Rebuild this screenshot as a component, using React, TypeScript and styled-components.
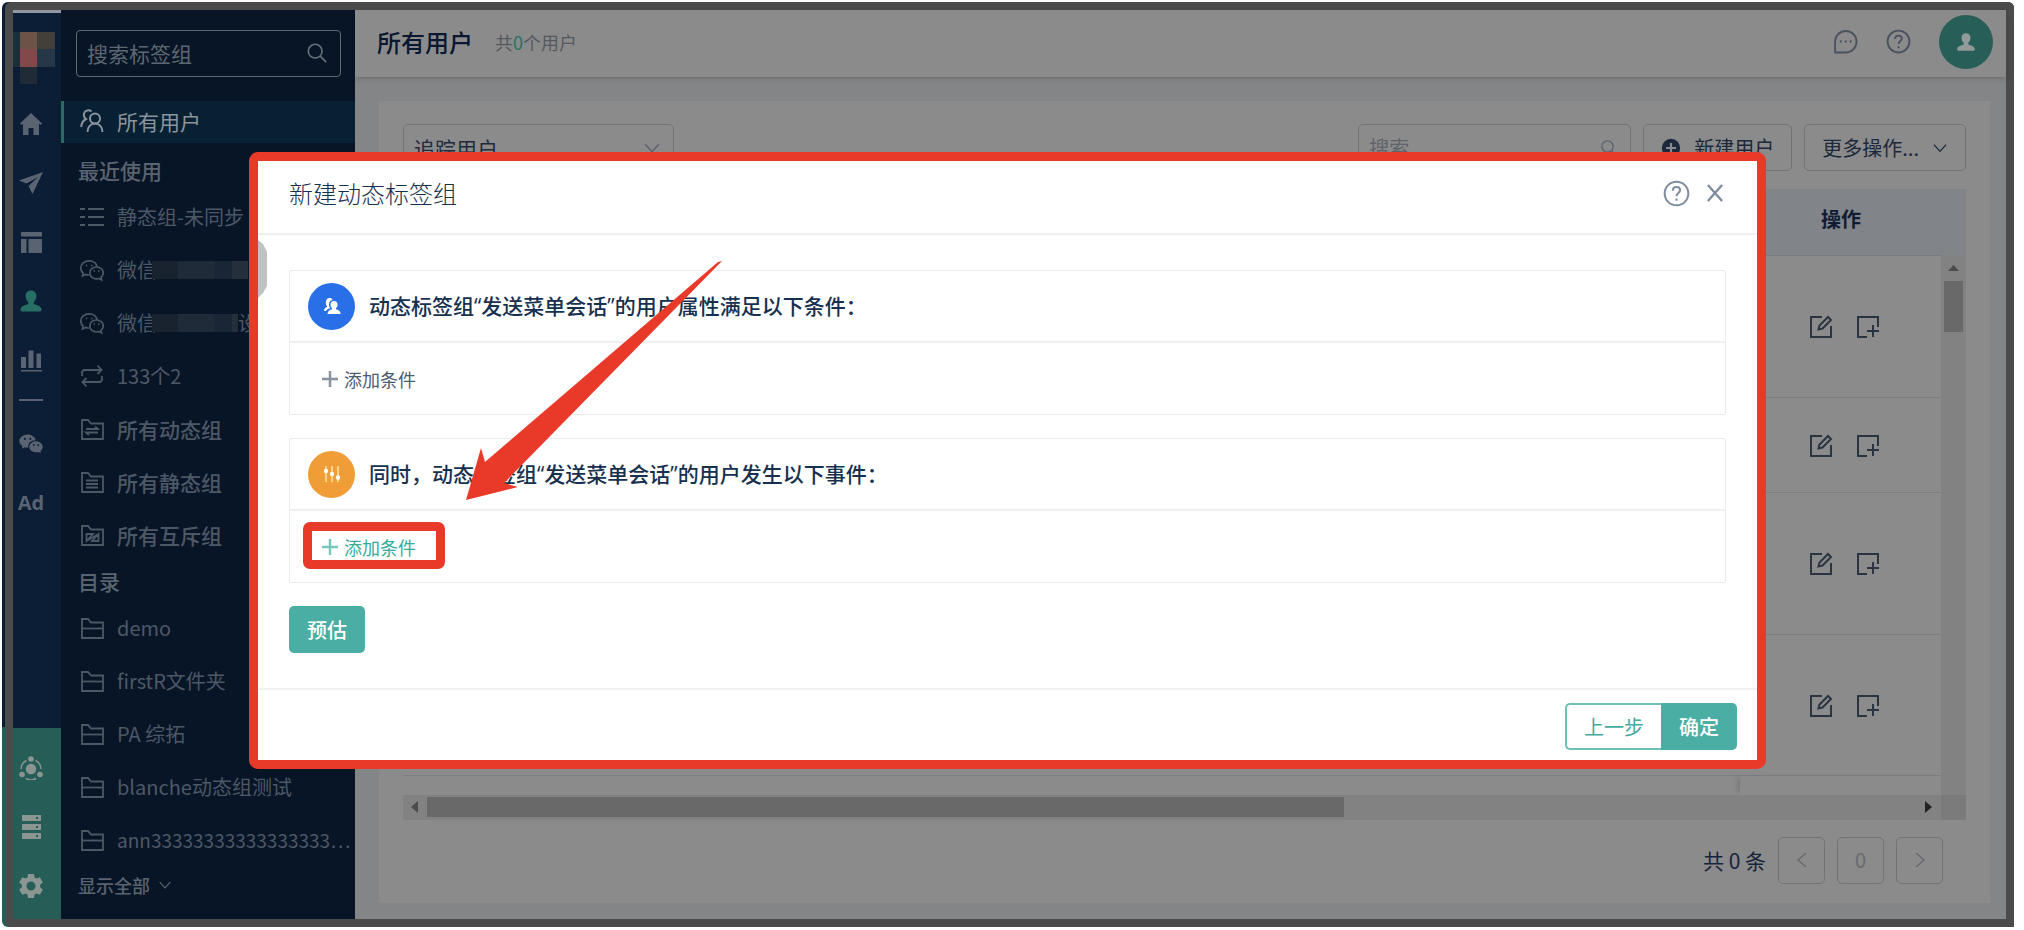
import React from "react";
import styled, { createGlobalStyle } from "styled-components";

const cjk = `"Noto Sans CJK SC", sans-serif`;
const mixed = `"Open Sans", "Noto Sans CJK SC", sans-serif`;

const Global = createGlobalStyle`
  * { box-sizing: border-box; }
  body { margin: 0; background: #fff; font-family: ${cjk}; font-size: 20px; line-height: 28px; color: #17233a; }
  button, input, select { font: inherit; color: inherit; margin: 0; padding: 0; border: 0; background: none; appearance: none; }
  a { color: inherit; text-decoration: none; }
  svg { display: block; flex: none; }
  h1, h2, h3, p { margin: 0; font-size: inherit; font-weight: inherit; }
`;

const Page = styled.div`
  min-height: 100vh;
  padding: 2px 10px 3px 2px;
  display: flex;
`;
const Edge = styled.div`
  flex: 1;
  display: flex;
  padding-left: 3px;
  border-radius: 6px;
  background: linear-gradient(#0b1c36 0, #0b1c36 calc(100% - 200px), #265e57 calc(100% - 200px));
`;
const Frame = styled.div`
  flex: 1;
  min-width: 0;
  display: flex;
  border: 8px solid #4b4b4b;
  border-radius: 6px 6px 0 6px;
  background: #838587;
`;

/* ---- icon rail ---- */
const Rail = styled.nav`
  width: 48px;
  flex: none;
  display: flex;
  flex-direction: column;
  background: #0c1d36;
  border-top: 3px solid #9397a1;
  color: #5a6371;
`;
const Mosaic = styled.div`
  display: grid;
  grid-template-columns: 7px 17px 18px;
  grid-template-rows: 17px 18px 17px 20px;
  padding-top: 19px;
`;
const Tile = styled.i<{ $c: string }>`
  background: ${(p) => p.$c};
`;
const RailLinks = styled.div`
  flex: 1;
  display: flex;
  flex-direction: column;
`;
const RailFoot = styled.div`
  display: flex;
  flex-direction: column;
  padding: 10px 0 4px;
  background: #265e57;
  color: #8b9592;
`;
const RailLink = styled.a<{ $on?: boolean; $h?: number }>`
  height: ${(p) => p.$h ?? 59}px;
  padding-right: 12px;
  display: flex;
  align-items: center;
  justify-content: center;
  color: ${(p) => (p.$on ? "#276f64" : "inherit")};
  font: 700 20px/28px ${mixed};
`;
const RailRule = styled.hr`
  width: 24px;
  margin: 20px 0 13px 6px;
  border: 0;
  border-top: 2px solid #5a6371;
`;

/* ---- group sidebar ---- */
const Side = styled.aside`
  width: 294px;
  flex: none;
  background: #081527;
  color: #4d5866;
  padding-top: 20px;
`;
const SideSearch = styled.label`
  display: flex;
  align-items: center;
  height: 47px;
  margin: 0 14px 24px 15px;
  padding: 0 12px 2px 10px;
  border: 1px solid #5f6975;
  border-radius: 4px;
  color: #66707b;
  input { flex: 1; min-width: 0; outline: 0; font-size: 21px; }
  input::placeholder { color: #5d6772; opacity: 1; }
`;
const SideTitle = styled.h3`
  height: 40px;
  padding: 0 17px 2px;
  display: flex;
  align-items: center;
  color: #5a6470;
  font-size: 21px;
  font-weight: 500;
`;
const SideItem = styled.a<{ $on?: boolean; $bold?: boolean; $long?: boolean }>`
  display: flex;
  align-items: center;
  gap: 13px;
  height: ${(p) => (p.$on ? 42 : 53)}px;
  margin-bottom: ${(p) => (p.$on ? 8 : 0)}px;
  padding: 0 0 2px ${(p) => (p.$on ? 16 : 19)}px;
  border-left: ${(p) => (p.$on ? "3px solid #2a6b62" : "0")};
  background: ${(p) => (p.$on ? "#072033" : "none")};
  color: ${(p) => (p.$on ? "#8b949d" : "inherit")};
  font-size: ${(p) => (p.$on || p.$bold ? 21 : p.$long ? 19 : 20)}px;
  font-weight: ${(p) => (p.$bold ? 500 : 400)};
  white-space: nowrap;
`;
const Masked = styled.span`
  display: flex;
  align-items: center;
`;
const Mask = styled.i<{ $w: number }>`
  width: ${(p) => p.$w}px;
  height: 18px;
  margin-left: -5px;
  background: linear-gradient(90deg, #18232f 0 26px, #1f2b39 26px 62px, #1a2636 62px 80px, #242f3b 80px);
`;
const ShowAll = styled.button`
  display: flex;
  align-items: center;
  gap: 8px;
  padding: 4px 17px;
  color: #5a6470;
  font-size: 18px;
  font-weight: 500;
`;

/* ---- main ---- */
const Main = styled.main`
  flex: 1;
  min-width: 0;
  display: flex;
  flex-direction: column;
`;
const Head = styled.header`
  height: 67px;
  flex: none;
  display: flex;
  align-items: center;
  padding: 0 13px 4px 22px;
  background: #8b8b8b;
  box-shadow: 0 2px 5px rgba(0, 0, 0, 0.16);
  color: #4a525f;
`;
const PageTitle = styled.h1`
  color: #0a1730;
  font-size: 24px;
  font-weight: 500;
  margin-right: 22px;
`;
const Count = styled.p`
  flex: 1;
  font-size: 18px;
  color: #55595f;
  span { color: #1f7368; }
`;
const HeadTools = styled.div`
  display: flex;
  align-items: center;
  gap: 28px;
`;
const Avatar = styled.button`
  width: 54px;
  height: 54px;
  border-radius: 50%;
  background: #275f58;
  color: #929b99;
  display: flex;
  align-items: center;
  justify-content: center;
`;
const Card = styled.section`
  flex: 1;
  margin: 24px 16px 16px 24px;
  padding: 23px 24px 0;
  background: #8b8b8b;
  display: flex;
  flex-direction: column;
`;
const Tools = styled.div`
  display: flex;
  gap: 12px;
  margin-bottom: 18px;
`;
const Field = styled.label<{ $w: number }>`
  width: ${(p) => p.$w}px;
  height: 47px;
  padding: 0 12px 0 10px;
  display: flex;
  align-items: center;
  border: 1px solid #6e747a;
  border-radius: 5px;
  color: #5b636e;
  input, select { flex: 1; min-width: 0; outline: 0; }
  select { color: #1f2a3c; font-size: 21px; }
  input::placeholder { color: #5f646b; opacity: 1; }
`;
const Spacer = styled.div`
  flex: 1;
`;
const ToolButton = styled.button`
  height: 47px;
  padding: 0 17px;
  display: flex;
  align-items: center;
  gap: 13px;
  border: 1px solid #6e747a;
  border-radius: 5px;
  color: #1c283b;
`;
const TableArea = styled.div`
  display: flex;
`;
const Table = styled.table`
  flex: 1;
  border-collapse: collapse;
  table-layout: fixed;
  th { height: 66px; padding: 0 0 6px; background: #818488; border-bottom: 1px solid #777c82; }
  th:last-child { width: 201px; padding-left: 81px; text-align: left; font-weight: 700; color: #0f1c33; }
  td { padding: 2px 0 0; border-bottom: 1px solid #7c7f82; }
  td:last-child { padding-left: 69px; }
`;
const Row = styled.tr<{ $h: number }>`
  height: ${(p) => p.$h}px;
`;
const Actions = styled.div`
  display: flex;
  gap: 23px;
  color: #2b3542;
`;
const VTrack = styled.div`
  width: 25px;
  padding-top: 10px;
  display: flex;
  flex-direction: column;
  align-items: center;
  gap: 10px;
  border-top: 66px solid #818488;
  background: #828282;
  color: #4c4c4c;
`;
const VThumb = styled.div`
  width: 19px;
  height: 51px;
  background: #696969;
`;
const Gap = styled.div`
  height: 19px;
  display: flex;
  justify-content: flex-end;
  border-right: 25px solid #828282;
`;
const FixedShade = styled.div`
  width: 201px;
  box-shadow: -4px 0 5px -2px rgba(0, 0, 0, 0.14);
`;
const HTrack = styled.div`
  height: 25px;
  padding: 0 0 0 8px;
  display: flex;
  align-items: center;
  background: #828282;
`;
const HThumb = styled.div`
  width: 59%;
  height: 20px;
  margin-left: 9px;
  background: #696969;
`;
const Corner = styled.div`
  width: 25px;
  height: 25px;
  margin-left: 9px;
  background: #7b7b7b;
`;
const Pager = styled.div`
  display: flex;
  align-items: center;
  justify-content: flex-end;
  gap: 12px;
  padding: 17px 23px 18px 0;
  p { font-size: 21px; }
`;
const PageButton = styled.button`
  width: 47px;
  height: 47px;
  border: 1px solid #707478;
  border-radius: 5px;
  color: #666a6e;
  display: flex;
  align-items: center;
  justify-content: center;
`;

/* ---- dialog ---- */
const Overlay = styled.div`
  position: absolute;
  inset: 0;
  padding: 152px 258px 0 249px;
  display: flex;
  align-items: flex-start;
`;
const Dialog = styled.section`
  position: relative;
  flex: 1;
  border: 9px solid #e93a29;
  border-radius: 9px;
  background: #fff;
  color: #17304f;
`;
const DialogHead = styled.header`
  height: 74px;
  padding: 0 33px 8px 31px;
  display: flex;
  align-items: center;
  gap: 16px;
  border-bottom: 2px solid #eff0f1;
  color: #7f8c9f;
  h2 { flex: 1; font-size: 24px; line-height: 32px; font-weight: 300; color: #17304f; }
`;
const DialogBody = styled.div`
  padding: 35px 31px 35px 31px;
  display: flex;
  flex-direction: column;
  align-items: flex-start;
  gap: 23px;
`;
const Rule = styled.section`
  width: 100%;
  border: 1px solid #e9ebed;
  border-radius: 2px;
`;
const RuleHead = styled.div`
  height: 72px;
  padding: 0 18px;
  display: flex;
  align-items: center;
  gap: 14px;
  border-bottom: 2px solid #eef0f1;
  font: 500 21px/28px ${mixed};
`;
const Badge = styled.span<{ $c: string }>`
  width: 47px;
  height: 47px;
  border-radius: 50%;
  background: ${(p) => p.$c};
  display: flex;
  align-items: center;
  justify-content: center;
`;
const RuleBody = styled.div`
  height: 71px;
  padding: 0 32px;
  display: flex;
  align-items: center;
`;
const AddButton = styled.button<{ $hot?: boolean }>`
  position: relative;
  display: flex;
  align-items: center;
  gap: 6px;
  font-size: 18px;
  color: ${(p) => (p.$hot ? "#33ab9e" : "#4d5b70")};
  svg { opacity: 0.65; }
`;
const Highlight = styled.i`
  position: absolute;
  inset: -11px -29px -8px -19px;
  border: 9px solid #e93a29;
  border-radius: 7px;
`;
const Primary = styled.button`
  height: 47px;
  padding: 0 18px;
  border-radius: 5px;
  background: #4baea4;
  color: #fff;
  font-weight: 500;
`;
const DialogFoot = styled.footer`
  height: 72px;
  padding: 0 20px 10px;
  display: flex;
  align-items: flex-end;
  justify-content: flex-end;
  border-top: 2px solid #f0f1f1;
  ${Primary} { border-radius: 0 5px 5px 0; }
`;
const Secondary = styled.button`
  height: 47px;
  padding: 0 17px;
  border: 2px solid #6fc0b8;
  border-right: 0;
  border-radius: 5px 0 0 5px;
  color: #45aaa0;
`;
const Arrow = styled.svg`
  position: absolute;
  left: 208px;
  top: 100px;
`;
const DrawerHandle = styled.svg`
  position: absolute;
  left: 0;
  top: 79px;
`;

/* ---- icons ---- */
type IconProps = { size?: number; vb?: number; fill?: boolean; w?: number; children: React.ReactNode };
const Icon = ({ size = 24, vb = 24, fill, w = 2, children }: IconProps) => (
  <svg width={size} height={size} viewBox={`0 0 ${vb} ${vb}`} fill={fill ? "currentColor" : "none"} stroke={fill ? "none" : "currentColor"} strokeWidth={w} aria-hidden="true">
    {children}
  </svg>
);
const Magnifier = ({ size }: { size: number }) => (
  <Icon size={size} w={1.8}><circle cx="10" cy="10" r="7.5" /><path d="M15.5 15.5 22 22" /></Icon>
);
const Chevron = ({ size }: { size: number }) => (
  <Icon size={size} w={2}><path d="M3 7l9 10 9-10" /></Icon>
);
const PersonShape = () => (
  <path d="M12 1.500c3.400 0 5.400 2.200 5.400 5.400 0 2.600-1 4.800-2.600 6v2c3.700 1.400 7.700 2.300 7.700 5.600 0 1.200-.5 2-1.500 2H3c-1 0-1.500-.8-1.500-2 0-3.300 4-4.200 7.700-5.600v-2C7.600 11.700 6.600 9.500 6.600 6.900c0-3.200 2-5.400 5.400-5.400z" />
);
const ListIcon = () => (
  <Icon><path d="M0 4h5M8 4h16M0 12h5M8 12h16M0 20h5M8 20h16" /></Icon>
);
const UsersIcon = () => (
  <Icon w={2}><circle cx="15" cy="9.500" r="5" /><path d="M7.500 23c.3-5 3-8.500 7.500-8.500s7.200 3.500 7.500 8.500M11.500 2.500C9 .5 5 1 4 4.500c-.5 2.500.5 4.500 2 5.500C3 11.500 1.500 14 1.200 18" /></Icon>
);
const WechatLine = () => (
  <Icon w={1.7}>
    <path d="M9 17c-1.500 0-2.600-.2-3.500-.6L2.500 18l.5-3C1.300 13.600.8 11.800.8 10c0-4 3.700-7.200 8.200-7.200 4.300 0 7.500 2.600 8.100 6" />
    <path d="M16.500 9c3.800 0 6.700 2.600 6.700 5.900 0 1.800-.8 3.300-2.200 4.400l.6 2.700-2.800-1.500c-.7.2-1.500.3-2.300.3-3.800 0-6.700-2.600-6.700-5.900S12.700 9 16.500 9z" />
    <path d="M5.800 7.500h1.500M11 7.500h1.500M13.500 13H15M18 13h1.500" />
  </Icon>
);
const WechatSolid = () => (
  <svg width="24" height="20" viewBox="0 0 24 20" fill="currentColor" fillRule="evenodd" aria-hidden="true">
    <path d="M8.500.5c4.200 0 7.500 2.500 8.200 5.700C12 6 8.600 9.200 9.300 13.600c-1.300.1-2.500 0-3.600-.4L2.800 14.800l.7-2.600C1.600 10.900.4 9.200.4 7.200.4 3.500 4 .5 8.500.5zM5.900 3.700a1.100 1.100 0 100 2.200 1.100 1.100 0 000-2.200zm5.400 0a1.100 1.100 0 100 2.200 1.100 1.100 0 000-2.200z" />
    <path d="M17 7.200c3.800 0 6.700 2.500 6.700 5.600 0 1.800-1 3.200-2.300 4.200l.5 2.200-2.400-1.300c-.8.3-1.600.4-2.500.4-3.800 0-6.700-2.400-6.700-5.500s2.900-5.600 6.700-5.600zm-2.200 2.900a.9.900 0 100 1.800.9.900 0 000-1.800zm4.300 0a.9.900 0 100 1.800.9.900 0 000-1.800z" />
  </svg>
);
const LoopIcon = () => (
  <Icon w={1.8}><path d="M2 12V9c0-2 1-3 3-3h16M17.500 1.500 21.500 6l-4 4M22 12v3c0 2-1 3-3 3H3M6.500 22.500 2.500 18l4-4" /></Icon>
);
const FolderIcon = ({ children }: { children?: React.ReactNode }) => (
  <Icon w={1.8}><path d="M2 3h6l3 3.500h12v15.500H2z" />{children}</Icon>
);
const PlainFolder = () => <FolderIcon><path d="M2 12.500h21" /></FolderIcon>;
const HelpIcon = ({ size }: { size: number }) => (
  <Icon size={size} w={1.8}><circle cx="12" cy="12" r="10.500" /><path d="M8.800 9.500c0-2 1.400-3.200 3.200-3.200s3.200 1.200 3.200 2.900c0 2.300-3.200 2.500-3.200 5.300M12 16.500v2" /></Icon>
);
const Plus = () => (
  <svg width="16" height="16" viewBox="0 0 16 16" stroke="currentColor" strokeWidth="2.500" aria-hidden="true"><path d="M8 0v16M0 8h16" /></svg>
);

const recent: [React.ReactNode, React.ReactNode][] = [
  [<ListIcon />, "静态组-未同步"],
  [<WechatLine />, <Masked>微信<Mask $w={96} /></Masked>],
  [<WechatLine />, <Masked>微信<Mask $w={86} />设</Masked>],
  [<LoopIcon />, "133个2"],
];
const groups: [React.ReactNode, string][] = [
  [<FolderIcon><path d="M6 12h12l-3-2.500M18 15.500H6l3 2.500" /></FolderIcon>, "所有动态组"],
  [<FolderIcon><path d="M6 10.500h12M6 14h12M6 17.500h12" /></FolderIcon>, "所有静态组"],
  [<FolderIcon><path d="M6.500 18v-7H13zM18.500 11v7H12zM6.500 18l12-7" /></FolderIcon>, "所有互斥组"],
];
const folders = ["demo", "firstR文件夹", "PA 综拓", "blanche动态组测试", "ann33333333333333333…"];
const tiles = ["#17303a", "#6b5347", "#433f3b", "#17303a", "#81494a", "#263748", "#0c1d36", "#212b36", "#0c1d36"];

export default function App() {
  return (
    <>
      <Global />
      <Page>
        <Edge>
          <Frame>
            <Rail aria-label="主导航">
              <Mosaic>{tiles.map((c, i) => <Tile key={i} $c={c} />)}</Mosaic>
              <RailLinks>
                <RailLink href="#" $h={40} aria-label="首页"><Icon fill><path d="M12 1 23 11.500l-1.500 1.500-1.500-1.300V23h-5.500v-7h-5v7H4V11.700L2.500 13 1 11.500z" /></Icon></RailLink>
                <RailLink href="#" $h={78} aria-label="营销"><Icon fill><path d="M24 1 13.500 23 9.500 15 19 6 7.500 12.500 0 9.500z" /></Icon></RailLink>
                <RailLink href="#" $h={40} aria-label="布局"><Icon fill><path d="M2 2h21v4.500H2zM2 9h5.500v14H2zM9.500 9H23v14H9.500z" /></Icon></RailLink>
                <RailLink href="#" $h={78} $on aria-label="用户"><Icon fill><PersonShape /></Icon></RailLink>
                <RailLink href="#" $h={39} aria-label="报表"><Icon fill><path d="M2 9h5v11H2zM9.500 2.500h5V20h-5zM17.500 5.500h4.500V20h-4.500zM2 22h21v1.500H2z" /></Icon></RailLink>
                <RailRule />
                <RailLink href="#" aria-label="微信"><WechatSolid /></RailLink>
                <RailLink href="#">Ad</RailLink>
              </RailLinks>
              <RailFoot>
                <RailLink href="#" aria-label="网络">
                  <Icon fill><circle cx="12" cy="13" r="5.200" /><circle cx="12" cy="3" r="2.800" /><circle cx="3" cy="18.500" r="2.800" /><circle cx="21" cy="18.500" r="2.800" /><path d="M7.500 4.500A10 10 0 0 0 2 13M16.500 4.500A10 10 0 0 1 22 13M7 22.500a10 10 0 0 0 10 0" fill="none" stroke="currentColor" strokeWidth="1.500" /></Icon>
                </RailLink>
                <RailLink href="#" aria-label="数据">
                  <Icon fill><path fillRule="evenodd" d="M3 0h19v6H3zM17 2v2h2V2zM3 9h19v6H3zM17 11v2h2v-2zM3 18h19v6H3zM17 20v2h2v-2z" /></Icon>
                </RailLink>
                <RailLink href="#" aria-label="设置">
                  <Icon fill><path fillRule="evenodd" d="M9 0h6l.6 3.500 1.900 1.100 3.300-1.300 3 5.200-2.700 2.200v2.600l2.700 2.200-3 5.200-3.300-1.300-1.900 1.100L15 24H9l-.6-3.500-1.900-1.100-3.300 1.300-3-5.200 2.700-2.200v-2.600L.2 8.500l3-5.200 3.300 1.300 1.900-1.100zM12 7.500a4.500 4.500 0 100 9 4.500 4.500 0 000-9z" /></Icon>
                </RailLink>
              </RailFoot>
            </Rail>

            <Side>
              <SideSearch><input aria-label="搜索标签组" placeholder="搜索标签组" /><Magnifier size={22} /></SideSearch>
              <SideItem href="#" $on><UsersIcon />所有用户</SideItem>
              <SideTitle>最近使用</SideTitle>
              {recent.map(([icon, label], i) => <SideItem href="#" key={i}>{icon}{label}</SideItem>)}
              {groups.map(([icon, label]) => <SideItem href="#" $bold key={label}>{icon}{label}</SideItem>)}
              <SideTitle>目录</SideTitle>
              {folders.map((label) => <SideItem href="#" key={label} $long={label.length > 20}><PlainFolder />{label}</SideItem>)}
              <ShowAll>显示全部<Chevron size={14} /></ShowAll>
            </Side>

            <Main>
              <Head>
                <PageTitle>所有用户</PageTitle>
                <Count>共<span>0</span>个用户</Count>
                <HeadTools>
                  <button aria-label="消息"><Icon size={25} w={1.8}><path d="M2 22.500V12a10.300 10.300 0 1 1 10.300 10.500zM6.500 12h2M11.200 12h2M16 12h2" /></Icon></button>
                  <button aria-label="帮助"><HelpIcon size={25} /></button>
                  <Avatar aria-label="账户"><Icon size={20} fill><PersonShape /></Icon></Avatar>
                </HeadTools>
              </Head>
              <Card>
                <Tools>
                  <Field $w={271}><select aria-label="用户类型"><option>追踪用户</option></select><Chevron size={18} /></Field>
                  <Spacer />
                  <Field $w={273}><input aria-label="搜索" placeholder="搜索" /><Magnifier size={18} /></Field>
                  <ToolButton><Icon size={20} fill><path fillRule="evenodd" d="M12 1a11 11 0 100 22 11 11 0 000-22zM10.700 6h2.600v4.700H18v2.600h-4.700V18h-2.600v-4.700H6v-2.600h4.700z" /></Icon>新建用户</ToolButton>
                  <ToolButton>更多操作...<Chevron size={16} /></ToolButton>
                </Tools>
                <TableArea>
                  <Table>
                    <thead><tr><th /><th>操作</th></tr></thead>
                    <tbody>
                      {[142, 95, 142, 141].map((h, i) => (
                        <Row $h={h} key={i}>
                          <td />
                          <td>
                            <Actions>
                              <button aria-label="编辑"><Icon><path d="M13 2H2v20h20V11M9.500 14.500l1-4L19 2l3 3-8.500 8.500z" /></Icon></button>
                              <button aria-label="添加"><Icon><path d="M22 12V2H2v20h9M11 16h12M17 10v12" /></Icon></button>
                            </Actions>
                          </td>
                        </Row>
                      ))}
                    </tbody>
                  </Table>
                  <VTrack>
                    <svg width="11" height="6" viewBox="0 0 11 6" fill="currentColor" aria-hidden="true"><path d="M0 6 5.500 0 11 6z" /></svg>
                    <VThumb />
                  </VTrack>
                </TableArea>
                <Gap><FixedShade /></Gap>
                <HTrack>
                  <svg width="7" height="12" viewBox="0 0 7 12" fill="#4c4c4c" aria-hidden="true"><path d="M7 0v12L0 6z" /></svg>
                  <HThumb />
                  <Spacer />
                  <svg width="7" height="12" viewBox="0 0 7 12" fill="#222" aria-hidden="true"><path d="M0 0v12l7-6z" /></svg>
                  <Corner />
                </HTrack>
                <Pager>
                  <p>共 0 条</p>
                  <PageButton aria-label="上一页"><svg width="10" height="16" viewBox="0 0 10 16" fill="none" stroke="currentColor" aria-hidden="true" strokeWidth="1.500"><path d="M9 1 1 8l8 7" /></svg></PageButton>
                  <PageButton>0</PageButton>
                  <PageButton aria-label="下一页"><svg width="10" height="16" viewBox="0 0 10 16" fill="none" stroke="currentColor" aria-hidden="true" strokeWidth="1.500"><path d="M1 1l8 7-8 7" /></svg></PageButton>
                </Pager>
              </Card>
            </Main>
          </Frame>
        </Edge>
      </Page>

      <Overlay>
        <Dialog role="dialog" aria-label="新建动态标签组">
          <DialogHead>
            <h2>新建动态标签组</h2>
            <button aria-label="帮助"><HelpIcon size={27} /></button>
            <button aria-label="关闭"><svg width="18" height="18" viewBox="0 0 19 19" fill="none" stroke="currentColor" strokeWidth="2.500" aria-hidden="true"><path d="M2 1l15 17M17 1 2 18" /></svg></button>
          </DialogHead>
          <DialogBody>
            <Rule>
              <RuleHead>
                <Badge $c="#286fe8">
                  <svg width="18" height="18" viewBox="0 0 18 18" fill="#fff" aria-hidden="true"><path d="M11 4c2.300 0 3.600 1.600 3.600 3.800 0 1.500-.6 2.800-1.600 3.500v1c2.500.7 4.500 1.700 4.700 4.700H4.500c.2-3 2.200-4 4.600-4.700v-1c-1-.7-1.600-2-1.600-3.500C7.500 5.600 8.700 4 11 4z" /><path d="M6.500 1C8 1 9 1.600 9.600 2.700 7.200 3.200 6 5.200 6 7.600c0 1.500.5 2.700 1.300 3.600-2.100.6-3.600 1.300-4.300 2.800H1c.2-2.200 1.300-3.300 3-3.900v-.9C3.200 8.500 2.800 7 2.800 5.500 2.800 2.800 4.300 1 6.500 1z" /></svg>
                </Badge>
                动态标签组“发送菜单会话”的用户属性满足以下条件：
              </RuleHead>
              <RuleBody><AddButton><Plus />添加条件</AddButton></RuleBody>
            </Rule>
            <Rule>
              <RuleHead>
                <Badge $c="#f09d37">
                  <svg width="18" height="18" viewBox="0 0 18 18" stroke="#fbe3a0" strokeWidth="1.500" aria-hidden="true"><path d="M3 1v16M9 1v16M15 1v16" /><g fill="#fff" stroke="none"><circle cx="3" cy="6" r="2.200" /><circle cx="9" cy="9" r="2.200" /><circle cx="15" cy="12.500" r="2.200" /></g></svg>
                </Badge>
                同时，动态标签组“发送菜单会话”的用户发生以下事件：
              </RuleHead>
              <RuleBody><AddButton $hot><Plus />添加条件<Highlight /></AddButton></RuleBody>
            </Rule>
            <Primary>预估</Primary>
          </DialogBody>
          <DialogFoot>
            <Secondary>上一步</Secondary>
            <Primary>确定</Primary>
          </DialogFoot>
          <DrawerHandle width="9" height="58" viewBox="0 0 9 58" fill="#bfc1c6" aria-hidden="true"><path d="M0 0l5 4 4 8v34l-4 7-5 5z" /></DrawerHandle>
          <Arrow width="257" height="240" viewBox="0 0 257 240" fill="#e93a29" aria-hidden="true"><path d="M256 0 38 222l14 4L0 239l15-52 4 14L252 1z" /></Arrow>
        </Dialog>
      </Overlay>
    </>
  );
}
